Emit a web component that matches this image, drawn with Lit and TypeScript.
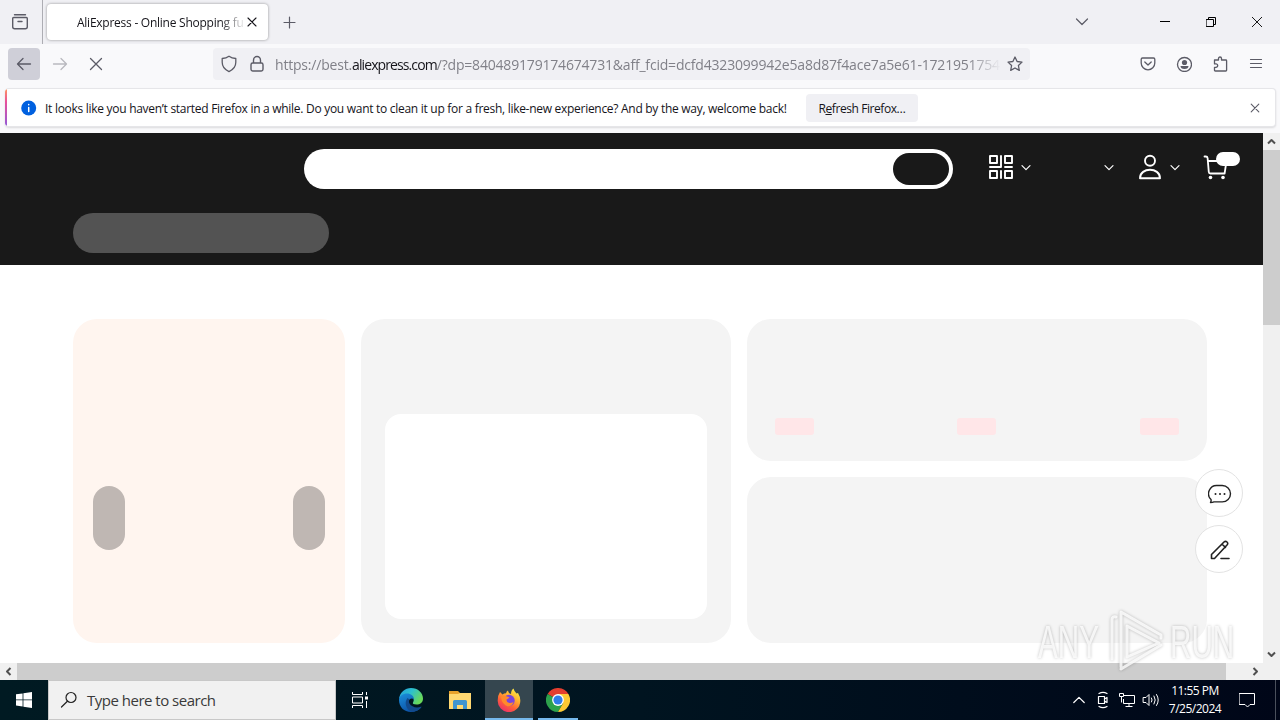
import { LitElement, html, svg, css } from 'lit';
import { customElement } from 'lit/decorators.js';

const icon = (w: number, h: number, body: unknown) => html`
  <svg class="icon" width=${w} height=${h} viewBox="0 0 ${w} ${h}" fill="none" stroke="currentColor"
    stroke-linecap="round" stroke-linejoin="round">${body}</svg>
`;

const shared = css`
  * {
    box-sizing: border-box;
  }

  .icon {
    display: block;
    flex: none;
  }
`;

/**
 * BrowserChrome - tab strip, toolbar and the notification bar
 */
@customElement('browser-chrome')
export class BrowserChrome extends LitElement {
  static styles = [shared, css`
    :host {
      display: block;
      height: 133px;
      background: #f9f9fb;
      color: #5b5b66;
      font-family: 'Open Sans', 'Noto Sans', sans-serif;
      font-size: 12px;
    }

    .tabs {
      display: flex;
      height: 44px;
      background: #f0f0f4;
    }

    .view {
      display: flex;
      align-items: center;
      justify-content: center;
      width: 43px;
      padding-right: 2px;
      height: 44px;
      border-right: 1px solid #adadb3;
    }

    .tab {
      display: flex;
      align-items: center;
      width: 221px;
      height: 36px;
      margin: 4px 0 0 4px;
      padding: 0 10px 0 30px;
      border-radius: 4px;
      background: #fff;
      box-shadow: 0 0 3px rgba(0, 0, 0, 0.4);
      color: #15141a;
    }

    .title {
      flex: 1;
      padding-top: 1px;
      white-space: nowrap;
      letter-spacing: -0.25px;
      mask-image: linear-gradient(to left, transparent, #000 26px);
    }

    .cell {
      display: flex;
      align-items: center;
      justify-content: center;
      width: 36px;
      height: 100%;
    }

    .plus {
      width: 43px;
    }

    .spacer {
      flex: 1;
    }

    .window {
      width: 46px;
      color: #000;
    }

    .list {
      margin-right: 42px;
    }

    .toolbar {
      display: flex;
      align-items: center;
      height: 44px;
      padding: 0 6px 4px 6px;
    }

    .back {
      width: 32px;
      height: 32px;
      margin: 0 2px;
      border-radius: 4px;
      background: #cfcfd8;
    }

    .forward {
      opacity: 0.4;
    }

    .url {
      display: flex;
      align-items: center;
      width: 817px;
      height: 32px;
      margin-left: 99px;
      padding: 0 7px 0 8px;
      border-radius: 4px;
      background: #f0f0f4;
    }

    .lock {
      margin-left: 12px;
    }

    .address {
      flex: 1;
      margin: 0 4px 0 10px;
      padding-top: 1px;
      white-space: nowrap;
      font-size: 14px;
      letter-spacing: -0.19px;
      color: #808088;
      mask-image: linear-gradient(to left, transparent 2px, #000 36px);
    }

    .host {
      letter-spacing: -0.9px;
      color: #15141a;
    }

    .notice {
      display: flex;
      align-items: center;
      height: 39px;
      margin: 0 4px 0 5px;
      border: 1px solid #e6e6e9;
      border-left: none;
      border-radius: 4px;
      overflow: hidden;
      background: #fff;
      box-shadow: 0 1px 2px rgba(0, 0, 0, 0.12);
      color: #15141a;
    }

    .stripe {
      width: 2px;
      height: 39px;
      background: linear-gradient(#ff9a5c, #e8509a 35%, #9059d8);
    }

    .info {
      margin: 0 8px 0 14px;
    }

    .message {
      width: 743px;
      padding-top: 1px;
      white-space: nowrap;
      letter-spacing: -0.285px;
    }

    .refresh {
      width: 112px;
      height: 28px;
      margin-left: 18px;
      padding-top: 2px;
      border: none;
      border-radius: 4px;
      background: #f0f0f4;
      font: inherit;
      letter-spacing: -0.42px;
      color: inherit;
    }

    .dismiss {
      margin-right: 2px;
      color: #5b5b66;
    }
  `];

  render() {
    return html`
      <div class="tabs">
        <div class="view">
          ${icon(18, 18, svg`<path d="M3.5 1.7h11M2.7 4.5h12.6q1 0 1 1v8.3q0 2-2 2H3.7q-2 0-2-2V5.5q0-1 1-1zM7 8.5h4" stroke-width="1.4"/>`)}
        </div>
        <div class="tab">
          <span class="title">AliExpress - Online Shopping fu</span>
          ${icon(12, 12, svg`<path d="M2 2l8 8M10 2l-8 8" stroke-width="1.1"/>`)}
        </div>
        <div class="cell plus">
          ${icon(13, 13, svg`<path d="M6.5 1v11M1 6.5h11" stroke-width="1.2"/>`)}
        </div>
        <div class="spacer"></div>
        <div class="cell list">
          ${icon(14, 10, svg`<path d="M1.5 2l5.5 5.5L12.5 2" stroke-width="1.2"/>`)}
        </div>
        <div class="cell window">
          ${icon(10, 10, svg`<path d="M0 4.5h10" stroke-linecap="butt"/>`)}
        </div>
        <div class="cell window">
          ${icon(10, 10, svg`<path d="M.5 2.5h7v7h-7zM2.5 2.5v-2h7v7h-2" stroke-linejoin="miter"/>`)}
        </div>
        <div class="cell window">
          ${icon(10, 10, svg`<path d="M0 0l10 10M10 0L0 10" stroke-width="0.9"/>`)}
        </div>
      </div>
      <div class="toolbar">
        <div class="cell back">
          ${icon(16, 16, svg`<path d="M14.500 8H2M7 2.500L1.500 8l5.500 5.500" stroke-width="1.3"/>`)}
        </div>
        <div class="cell forward">
          ${icon(16, 16, svg`<path d="M1.500 8H14M9 2.500L14.500 8L9 13.500" stroke-width="1.3"/>`)}
        </div>
        <div class="cell">
          ${icon(14, 14, svg`<path d="M1.500 1.500l11 11M12.500 1.500l-11 11" stroke-width="1.3"/>`)}
        </div>
        <div class="url">
          ${icon(16, 18, svg`<path d="M8 1.200c2 1.500 4.200 2.200 6.800 2.300v3.800c0 4.500-3.400 7.800-6.800 9.300c-3.400-1.500-6.800-4.800-6.800-9.300V3.500C3.800 3.400 6 2.700 8 1.200z" stroke-width="1.3"/>`)}
          <div class="lock">
            ${icon(16, 18, svg`<path d="M3.700 8h8.600q1.700 0 1.700 1.700v4.600q0 1.700-1.700 1.700H3.700q-1.700 0-1.700-1.700V9.700Q2 8 3.700 8zM4.500 8V5.200a3.500 3.700 0 0 1 7 0V8" stroke-width="1.4"/>`)}
          </div>
          <span class="address">https://best.<span class="host">aliexpress.com</span>/?dp=840489179174674731&amp;aff_fcid=dcfd4323099942e5a8d87f4ace7a5e61-1721951754</span>
          ${icon(16, 16, svg`<path d="M8 1l2.100 4.500l4.900.6l-3.600 3.400l.9 4.900L8 12l-4.300 2.400l.9-4.900L1 6.100l4.900-.6z" stroke-width="1.3"/>`)}
        </div>
        <div class="spacer"></div>
        <div class="cell">
          ${icon(16, 16, svg`<path d="M2.500 2h11q1.300 0 1.300 1.300V7a6.800 6.800 0 0 1-13.600 0V3.300Q1.200 2 2.500 2zM4.800 6L8 9l3.200-3" stroke-width="1.3"/>`)}
        </div>
        <div class="cell">
          ${icon(16, 16, svg`<circle cx="8.500" cy="8.500" r="7" stroke-width="1.3"/><circle cx="8.500" cy="6.500" r="2.600" fill="currentColor" stroke="none"/><path d="M4.500 10h8q0 3-4 3t-4-3z" fill="currentColor" stroke="none"/>`)}
        </div>
        <div class="cell">
          ${icon(16, 16, svg`<path d="M2.500 4h4V2.500a1.500 1.500 0 0 1 3 0V4h4.300q.8 0 .8.800v9.400q0 .8-.8.800H3.300q-.8 0-.8-.8V11.300H4a1.700 1.700 0 0 0 0-3.400H2.500z" stroke-width="1.3"/>`)}
        </div>
        <div class="cell">
          ${icon(14, 14, svg`<path d="M1.500 2.500h11M1.500 6.500h11M1.500 10.500h11" stroke-width="1.2"/>`)}
        </div>
      </div>
      <div class="notice">
        <div class="stripe"></div>
        <div class="info">
          ${icon(16, 16, svg`<circle cx="7.700" cy="8" r="7.500" fill="#0060df" stroke="none"/><path d="M7.700 7.500v4M7.700 4.500v.2" stroke="#fff" stroke-width="1.5"/>`)}
        </div>
        <span class="message">It looks like you haven’t started Firefox in a while. Do you want to clean it up for a fresh, like-new experience? And by the way, welcome back!</span>
        <button class="refresh">R<u>e</u>fresh Firefox…</button>
        <div class="spacer"></div>
        <div class="cell dismiss">
          ${icon(10, 10, svg`<path d="M1.200 1.200l7.600 7.600M8.800 1.200L1.200 8.800" stroke-width="1.1"/>`)}
        </div>
      </div>
    `;
  }
}

/**
 * ShopPage - storefront while it is still loading
 */
@customElement('shop-page')
export class ShopPage extends LitElement {
  static styles = [shared, css`
    :host {
      display: block;
      position: relative;
      width: 1263px;
      height: 530px;
      overflow: hidden;
      background: #fff;
    }

    header {
      height: 132px;
      padding-top: 16px;
      background: #191919;
      color: #fff;
    }

    .top {
      display: flex;
      height: 40px;
      padding-left: 304px;
    }

    .search {
      display: flex;
      justify-content: flex-end;
      width: 649px;
      height: 40px;
      padding: 4px;
      border-radius: 20px;
      background: #fff;
    }

    .submit {
      width: 56px;
      border-radius: 16px;
      background: #191919;
    }

    .links {
      display: flex;
      align-items: center;
      height: 36px;
      margin-left: 36px;
    }

    .arrow {
      margin-left: 8px;
      padding-top: 1px;
    }

    .locale {
      margin-left: 73px;
      padding-top: 1px;
    }

    .account {
      margin-left: 24px;
    }

    .cart {
      position: relative;
      margin-left: 23px;
    }

    .badge {
      position: absolute;
      top: -2px;
      left: 13px;
      width: 24px;
      height: 14px;
      border-radius: 7px;
      background: #fff;
    }

    .categories {
      width: 256px;
      height: 40px;
      margin: 24px 0 0 73px;
      border-radius: 20px;
      background: #535353;
    }

    .cards {
      display: grid;
      grid-template-columns: 272px 370px 460px;
      gap: 16px;
      height: 324px;
      margin: 54px 0 0 73px;
    }

    .card {
      border-radius: 24px;
      background: #f4f4f4;
    }

    .banner {
      display: flex;
      align-items: center;
      justify-content: space-between;
      padding: 74px 20px 0;
      background: #fff5ef;
    }

    .slide {
      width: 32px;
      height: 64px;
      border-radius: 16px;
      background: #bfb7b3;
    }

    .deal {
      padding: 95px 24px 24px;
    }

    .frame {
      height: 205px;
      border-radius: 16px;
      background: #fff;
    }

    .side {
      display: grid;
      grid-template-rows: 142px 166px;
      gap: 16px;
    }

    .prices {
      display: grid;
      grid-template-columns: 182px 183px 39px;
      padding: 99px 28px 0;
    }

    .price {
      width: 39px;
      height: 17px;
      border-radius: 3px;
      background: #ffe6e8;
    }

    .floating {
      position: absolute;
      top: 336px;
      left: 1195px;
      display: grid;
      gap: 8px;
    }

    .round {
      display: flex;
      align-items: center;
      justify-content: center;
      width: 48px;
      height: 48px;
      padding: 2px 0 0 2px;
      border: 1px solid #e3e3e3;
      border-radius: 50%;
      background: #fff;
      color: #222;
    }
  `];

  arrow() {
    return icon(10, 8, svg`<path d="M1 1.700l4 4l4-4" stroke-width="1.2"/>`);
  }

  render() {
    return html`
      <header>
        <div class="top">
          <div class="search"><div class="submit"></div></div>
          <div class="links">
            ${icon(24, 24, svg`<path d="M1 1h7v7H1zM16 1h7v7h-7zM1 16h7v7H1zM16 16h7v7h-7zM12 1v11M1 12h11M16 12h7M12 16v7" stroke-width="1.9"/>`)}
            <div class="arrow">${this.arrow()}</div>
            <div class="locale">${this.arrow()}</div>
            <div class="account">
              ${icon(24, 26, svg`<circle cx="12" cy="6.700" r="5" stroke-width="1.9"/><path d="M2 24.200C2 18.500 7 15.800 12 15.800s10 2.700 10 8.400z" stroke-width="1.9"/>`)}
            </div>
            <div class="arrow">${this.arrow()}</div>
            <div class="cart">
              ${icon(26, 26, svg`<path d="M1.500 2.500h1.300q1.600 0 1.800 1.600L5.800 18q.1 1.500 1.600 1.500h14M5 7h18.500l-1.900 12.500" stroke-width="1.8"/><circle cx="7.500" cy="23.500" r="1.800" fill="currentColor" stroke="none"/><circle cx="20" cy="23.500" r="1.800" fill="currentColor" stroke="none"/>`)}
              <div class="badge"></div>
            </div>
          </div>
        </div>
        <div class="categories"></div>
      </header>
      <div class="cards">
        <div class="card banner">
          <div class="slide"></div>
          <div class="slide"></div>
        </div>
        <div class="card deal"><div class="frame"></div></div>
        <div class="side">
          <div class="card prices">
            <div class="price"></div>
            <div class="price"></div>
            <div class="price"></div>
          </div>
          <div class="card"></div>
        </div>
      </div>
      <div class="floating">
        <div class="round">
          ${icon(24, 24, svg`<path d="M2.500 20.500q.9-1.400.5-3A8.200 8.200 0 0 1 9.500 3.500h4.800a8.200 8.200 0 0 1 0 16.400H6q-1.500.6-3.500.6z" stroke-width="1.4"/><path d="M7.500 12h.01M12 12h.01M16.500 12h.01" stroke-width="2"/>`)}
        </div>
        <div class="round">
          ${icon(24, 24, svg`<path d="M3.500 20.500v-4L16 4q1.500-1.300 3 0t0 3L6.500 20.500zM14 6l3.500 3.500M13 20.500h8" stroke-width="1.6"/>`)}
        </div>
      </div>
    `;
  }
}

/**
 * TaskBar - Windows task bar with the pinned programs and the tray
 */
@customElement('task-bar')
export class TaskBar extends LitElement {
  static styles = [shared, css`
    :host {
      display: flex;
      align-items: center;
      height: 40px;
      background: linear-gradient(to right, #001a22, #001420 50%, #000618);
      color: #fff;
      font-family: 'Open Sans', 'Noto Sans', sans-serif;
    }

    .start,
    .program {
      display: flex;
      align-items: center;
      justify-content: center;
      width: 48px;
      height: 40px;
    }

    .program {
      margin-right: 1px;
    }

    .view {
      margin-right: 3px;
    }

    .active {
      background: #35464f;
      border-bottom: 2px solid #76b9ed;
      padding-top: 2px;
    }

    .running {
      width: 40px;
      margin-left: 4px;
      border-bottom: 2px solid #76b9ed;
      padding-top: 2px;
    }

    .search {
      display: flex;
      align-items: center;
      width: 288px;
      height: 40px;
      padding-left: 11px;
      border: 1px solid #c8c8c8;
      background: #f1f1f1;
      color: #222;
      font-size: 15px;
      letter-spacing: -0.5px;
    }

    .hint {
      margin-left: 9px;
      white-space: nowrap;
      color: #3a3a3a;
    }

    .spacer {
      flex: 1;
    }

    .tray {
      display: flex;
      width: 24px;
      justify-content: center;
    }

    .clock {
      width: 64px;
      font-size: 12px;
      line-height: 18px;
      letter-spacing: -0.5px;
      text-align: center;
      white-space: nowrap;
    }

    .center {
      display: flex;
      align-items: center;
      justify-content: center;
      width: 49px;
      height: 40px;
      margin-right: 4px;
      padding-right: 8px;
      border-right: 1px solid #4a505c;
    }
  `];

  render() {
    return html`
      <div class="start">
        ${icon(16, 16, svg`<path d="M0 2.300L6.600 1.400v6.100H0zM7.400 1.300L16 0v7.500H7.400zM0 8.300h6.600v6.100L0 13.500zM7.400 8.300H16V16l-8.600-1.300z" fill="#fff" stroke="none"/>`)}
      </div>
      <div class="search">
        ${icon(18, 18, svg`<circle cx="11" cy="6.500" r="5" stroke-width="1.2"/><path d="M7.400 10.200L1.500 16" stroke-width="1.2"/>`)}
        <span class="hint">Type here to search</span>
      </div>
      <div class="program view">
        ${icon(18, 16, svg`<path d="M1.500 0v2.500h10V0M1.500 16v-2.500h10V16M1.500 5h10v6h-10zM15.500 0v3M15.500 9v7" stroke-linecap="butt" stroke-linejoin="miter"/><path d="M14 4.500h3v3h-3z" fill="#fff" stroke="none"/>`)}
      </div>
      <div class="program">
        ${icon(26, 26, svg`
          <defs>
            <linearGradient id="sea" x1="0" y1="0" x2="1" y2="0.5"><stop offset="0" stop-color="#249bdc"/><stop offset="0.5" stop-color="#2cc0cf"/><stop offset="1" stop-color="#69d95a"/></linearGradient>
            <linearGradient id="deep" x1="0" y1="0" x2="0.5" y2="1"><stop offset="0" stop-color="#1b8fdc"/><stop offset="1" stop-color="#0c51a5"/></linearGradient>
          </defs>
          <g stroke="none">
            <path d="M1 12C2 5 7 1 13 1c7 0 12 5 12 10.500c0 4-3 6-6.500 6c-3 0-4.200-1-3.500-2c2-3 0-7-5-7c-4 0-8 1-9 3.500z" fill="url(#sea)"/>
            <path d="M1 13c0-4 4-6.500 8-6.500c4 0 7 2.500 7 6c-1-1-3-1.500-4.500 0c-3 3 0 9 6.500 9q3 0 5.500-1.500C21 23.500 17 25 13 25C6 25 1 20 1 13z" fill="url(#deep)"/>
            <path d="M9.500 11c-4 5-1 12 4.500 13.900C20 24.500 23 21 23.500 19.500c-5 2-10 .5-12-3c-1-2-.5-3 0-4z" fill="#124a8c"/>
          </g>`)}
      </div>
      <div class="program">
        ${icon(22, 20, svg`
          <g stroke="none">
            <path d="M0 1h9l2 2h11v16H0z" fill="#e8a22c"/>
            <path d="M0 4h9l2-1h11v16H0z" fill="#ffd871"/>
            <path d="M4 11.500q0-1.500 1.500-1.500h11q1.500 0 1.500 1.500V19h-4v-4H8v4H4z" fill="#3f94cf"/>
          </g>`)}
      </div>
      <div class="program active">
        ${icon(24, 24, svg`
          <defs>
            <linearGradient id="flame" x1="0.8" y1="0" x2="0.2" y2="1"><stop offset="0" stop-color="#fff24a"/><stop offset="0.35" stop-color="#ffb02e"/><stop offset="0.65" stop-color="#ff6038"/><stop offset="1" stop-color="#e92871"/></linearGradient>
          </defs>
          <g stroke="none">
            <path d="M3 4l2.500 2.500Q7 5.200 9 5.200Q9.500 3 11 2.500Q11 5 14 6Q14 2 16.500.5Q17 3 19.500 5.500l1.500-.5Q23.500 9 23.300 13.200A11.300 11.300 0 0 1 .7 12.500Q.8 7 3 4z" fill="url(#flame)"/>
            <circle cx="12" cy="12.500" r="5.700" fill="#7a45dc"/>
            <path d="M4 9q3-2 6-.5l2.500.7Q11 11 9.500 11.500Q9.500 14.500 12.500 15q2.500 0 4-1q-1 4-5.500 4.500Q5 17 4 9z" fill="#ff8a2b"/>
          </g>`)}
      </div>
      <div class="program running">
        ${icon(24, 24, svg`
          <g stroke="none">
            <path d="M12 12L1.600 6A12 12 0 0 1 22.400 6z" fill="#e43e2f"/>
            <path d="M12 12L1.600 6A12 12 0 0 0 12 24l5.200-9z" fill="#2da24c"/>
            <path d="M12 6h10.400A12 12 0 0 1 12 24l5.200-9z" fill="#fcc934"/>
            <circle cx="12" cy="12" r="5.900" fill="#fff"/>
            <circle cx="12" cy="12" r="4.600" fill="#2f7de9"/>
          </g>`)}
      </div>
      <div class="spacer"></div>
      <div class="tray">
        ${icon(12, 8, svg`<path d="M.8 6.500L6 1.300l5.200 5.200" stroke-width="1.2"/>`)}
      </div>
      <div class="tray">
        ${icon(14, 18, svg`<path d="M2.500 5.500h6v7h-6zM8.500 8l2.500-1.500v5L8.500 10M3 2.500Q7 .2 11 2.500M3 15.500Q7 17.800 11 15.500" stroke-width="1.2"/>`)}
      </div>
      <div class="tray">
        ${icon(16, 16, svg`<path d="M5 3.500h10.500v8H4.500V7M10 11.500v3M6.500 14.500h7M.5 1.500h4v3h-4zM2.500 4.500v6" stroke-linecap="butt" stroke-linejoin="miter"/>`)}
      </div>
      <div class="tray">
        ${icon(18, 16, svg`<path d="M1.500 5.500H4l3-3v11l-3-3H1.500zM9.500 6q1.300 2 0 4M12 4q2.600 4 0 8M14.500 2.500q3.600 5.500 0 11"/>`)}
      </div>
      <div class="clock">11:55 PM<br>7/25/2024</div>
      <div class="center">
        ${icon(16, 16, svg`<path d="M.5 1.500h15v11H11l-2.500 2.500l-2.500-2.500H.5z" stroke-linejoin="miter"/>`)}
      </div>
    `;
  }
}

/**
 * AppRoot - the desktop
 */
@customElement('app-root')
export class AppRoot extends LitElement {
  static styles = [shared, css`
    :host {
      display: block;
      position: relative;
      width: 1280px;
      height: 720px;
      overflow: hidden;
    }

    .viewport {
      display: flex;
      height: 530px;
    }

    .vertical,
    .horizontal {
      display: flex;
      background: #f0f0f0;
      color: #505050;
    }

    .vertical {
      flex-direction: column;
      width: 17px;
    }

    .horizontal {
      height: 17px;
    }

    .step {
      display: flex;
      align-items: center;
      justify-content: center;
      width: 17px;
      height: 17px;
    }

    .thumb {
      background: #cdcdcd;
    }

    .vertical .thumb {
      height: 175px;
      margin-bottom: auto;
    }

    .horizontal .thumb {
      width: 1209px;
    }

    .horizontal .last {
      margin-left: 21px;
    }

    .mark {
      position: absolute;
      top: 609px;
      left: 1038px;
      display: flex;
      align-items: center;
      width: 200px;
      height: 64px;
      font-family: 'Liberation Sans', sans-serif;
      font-size: 47px;
      color: rgba(255, 255, 255, 0.8);
      filter: drop-shadow(0 0 1.5px rgba(0, 0, 0, 0.3));
    }

    .word {
      width: 68px;
      white-space: nowrap;
      transform: scaleX(0.63);
      transform-origin: left;
    }

    .play {
      margin: 0 4px 0 0;
    }
  `];

  render() {
    return html`
      <browser-chrome></browser-chrome>
      <div class="viewport">
        <shop-page></shop-page>
        <div class="vertical">
          <div class="step">${icon(9, 7, svg`<path d="M1 5.500l3.500-3.500L8 5.500" stroke-width="2" stroke-linecap="butt"/>`)}</div>
          <div class="thumb"></div>
          <div class="step">${icon(9, 7, svg`<path d="M1 1.500L4.500 5L8 1.500" stroke-width="2" stroke-linecap="butt"/>`)}</div>
        </div>
      </div>
      <div class="horizontal">
        <div class="step">${icon(7, 9, svg`<path d="M5.500 1L2 4.500L5.500 8" stroke-width="2" stroke-linecap="butt"/>`)}</div>
        <div class="thumb"></div>
        <div class="step last">${icon(7, 9, svg`<path d="M1.500 1L5 4.500L1.500 8" stroke-width="2" stroke-linecap="butt"/>`)}</div>
      </div>
      <task-bar></task-bar>
      <div class="mark">
        <span class="word">ANY</span>
        <div class="play">
          ${icon(60, 64, svg`<path d="M6 50V11q0-4 4-3M15 58V3L55 26v3M15 60L55 36M21 48V17l32 17z" stroke-width="3"/>`)}
        </div>
        <span class="word">RUN</span>
      </div>
    `;
  }
}
